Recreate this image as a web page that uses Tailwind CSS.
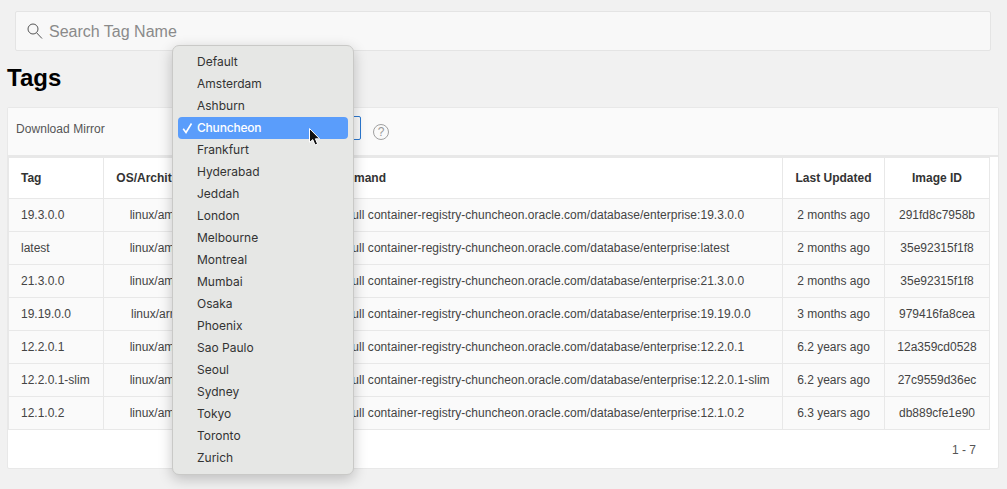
<!DOCTYPE html>
<html>
<head>
<meta charset="utf-8">
<script src="https://cdn.jsdelivr.net/npm/@tailwindcss/browser@4"></script>
</head>
<body class="relative h-[489px] w-[1007px] overflow-hidden bg-[#f1f1f1] font-['Liberation_Sans',sans-serif] text-[#333]">
<div class="px-[15px] pt-[11px] pr-[16px]">
  <div class="flex h-[40px] items-center rounded-[2px] border border-[#e4e4e4] bg-[#f8f8f8] pl-[10px]">
    <svg class="h-[17px] w-[17px] text-[#555]" viewBox="0 0 17 17" fill="none" stroke="currentColor" stroke-width="1"><circle cx="7" cy="6" r="5"/><path d="M10.6 9.8 L16 15.5"/></svg>
    <span class="ml-[6px] pt-[2px] text-[16px] text-[#8a8a8a]">Search Tag Name</span>
  </div>
</div>
<h1 class="ml-[7px] mt-[12px] h-[33px] text-[24px] leading-[30px] font-bold text-black">Tags</h1>
<div class="ml-[7px] mt-[11px] h-[362px] w-[992px] rounded-[2px] border border-[#e8e8e8] bg-white">
  <div class="flex h-[49px] items-start border-b-[2px] border-[#e8e8e8] bg-[#fafafa]">
    <span class="ml-[8px] mt-[14px] text-[12px] leading-[14px] tracking-[0.05px] text-[#555]">Download Mirror</span>
    <div class="ml-auto mr-[637px] mt-[8px] h-[24px] w-[20px] rounded-r-[2px] border border-[#2b78d0]"></div>
  </div>
  <table class="w-[981px] table-fixed border-collapse text-[12px] text-[#444]">
    <colgroup><col class="w-[95px]"><col class="w-[117px]"><col class="w-[73px]"><col class="w-[489px]"><col class="w-[102px]"><col class="w-[105px]"></colgroup>
    <thead class="bg-white font-bold text-[#333]">
      <tr class="h-[41px]">
        <th class="border border-[#e8e8e8] pl-[12px] text-left">Tag</th>
        <th class="border border-[#e8e8e8] whitespace-nowrap">OS/Architecture</th>
        <th class="border border-[#e8e8e8]"></th>
        <th class="border border-[#e8e8e8] pl-[8px] text-left">Pull Command</th>
        <th class="border border-[#e8e8e8]">Last Updated</th>
        <th class="border border-[#e8e8e8]">Image ID</th>
      </tr>
    </thead>
    <tbody>
      <tr class="h-[33px] bg-[#fafafa]"><td class="border border-[#e8e8e8] pl-[12px]">19.3.0.0</td><td class="border border-[#e8e8e8] text-center">linux/amd64</td><td class="border border-[#e8e8e8]"></td><td class="border border-[#e8e8e8] pl-[12px] tracking-[0.04px] whitespace-nowrap">docker pull container-registry-chuncheon.oracle.com/database/enterprise:19.3.0.0</td><td class="border border-[#e8e8e8] text-center">2 months ago</td><td class="border border-[#e8e8e8] text-center">291fd8c7958b</td></tr>
      <tr class="h-[33px] bg-[#fafafa]"><td class="border border-[#e8e8e8] pl-[12px]">latest</td><td class="border border-[#e8e8e8] text-center">linux/amd64</td><td class="border border-[#e8e8e8]"></td><td class="border border-[#e8e8e8] pl-[12px] tracking-[0.04px] whitespace-nowrap">docker pull container-registry-chuncheon.oracle.com/database/enterprise:latest</td><td class="border border-[#e8e8e8] text-center">2 months ago</td><td class="border border-[#e8e8e8] text-center">35e92315f1f8</td></tr>
      <tr class="h-[33px] bg-[#fafafa]"><td class="border border-[#e8e8e8] pl-[12px]">21.3.0.0</td><td class="border border-[#e8e8e8] text-center">linux/amd64</td><td class="border border-[#e8e8e8]"></td><td class="border border-[#e8e8e8] pl-[12px] tracking-[0.04px] whitespace-nowrap">docker pull container-registry-chuncheon.oracle.com/database/enterprise:21.3.0.0</td><td class="border border-[#e8e8e8] text-center">2 months ago</td><td class="border border-[#e8e8e8] text-center">35e92315f1f8</td></tr>
      <tr class="h-[33px] bg-[#fafafa]"><td class="border border-[#e8e8e8] pl-[12px]">19.19.0.0</td><td class="border border-[#e8e8e8] text-center">linux/arm64</td><td class="border border-[#e8e8e8]"></td><td class="border border-[#e8e8e8] pl-[12px] tracking-[0.04px] whitespace-nowrap">docker pull container-registry-chuncheon.oracle.com/database/enterprise:19.19.0.0</td><td class="border border-[#e8e8e8] text-center">3 months ago</td><td class="border border-[#e8e8e8] text-center">979416fa8cea</td></tr>
      <tr class="h-[33px] bg-[#fafafa]"><td class="border border-[#e8e8e8] pl-[12px]">12.2.0.1</td><td class="border border-[#e8e8e8] text-center">linux/amd64</td><td class="border border-[#e8e8e8]"></td><td class="border border-[#e8e8e8] pl-[12px] tracking-[0.04px] whitespace-nowrap">docker pull container-registry-chuncheon.oracle.com/database/enterprise:12.2.0.1</td><td class="border border-[#e8e8e8] text-center">6.2 years ago</td><td class="border border-[#e8e8e8] text-center">12a359cd0528</td></tr>
      <tr class="h-[33px] bg-[#fafafa]"><td class="border border-[#e8e8e8] pl-[12px]">12.2.0.1-slim</td><td class="border border-[#e8e8e8] text-center">linux/amd64</td><td class="border border-[#e8e8e8]"></td><td class="border border-[#e8e8e8] pl-[12px] tracking-[0.04px] whitespace-nowrap">docker pull container-registry-chuncheon.oracle.com/database/enterprise:12.2.0.1-slim</td><td class="border border-[#e8e8e8] text-center">6.2 years ago</td><td class="border border-[#e8e8e8] text-center">27c9559d36ec</td></tr>
      <tr class="h-[33px] bg-[#fafafa]"><td class="border border-[#e8e8e8] pl-[12px]">12.1.0.2</td><td class="border border-[#e8e8e8] text-center">linux/amd64</td><td class="border border-[#e8e8e8]"></td><td class="border border-[#e8e8e8] pl-[12px] tracking-[0.04px] whitespace-nowrap">docker pull container-registry-chuncheon.oracle.com/database/enterprise:12.1.0.2</td><td class="border border-[#e8e8e8] text-center">6.3 years ago</td><td class="border border-[#e8e8e8] text-center">db889cfe1e90</td></tr>
    </tbody>
  </table>
  <div class="mr-[22px] mt-[13px] text-right text-[12px] leading-[14px] text-[#555]">1 - 7</div>
</div>

<div class="absolute left-[373px] top-[124px] flex h-[16px] w-[16px] items-center justify-center rounded-full border border-[#a0a0a0] text-[12px] leading-none text-[#999]">?</div>

<div class="absolute left-[172px] top-[45px] h-[430px] w-[182px] rounded-[7px] border border-[#c9c9c7] bg-[#e6e7e5] px-[5px] pt-[5px] font-['Inter',sans-serif] text-[12px] leading-[22px] text-[#333] shadow-[0_4px_14px_rgba(0,0,0,0.22)]">
  <div class="h-[22px] pl-[19px]">Default</div>
  <div class="h-[22px] pl-[19px]">Amsterdam</div>
  <div class="h-[22px] pl-[19px]">Ashburn</div>
  <div class="relative h-[22px] rounded-[4px] bg-[#5a9dfb] pl-[19px] font-medium tracking-[-0.2px] text-white"><svg class="absolute left-[4px] top-[5px] h-[12px] w-[11px]" viewBox="0 0 11 12" fill="none" stroke="#fff" stroke-width="1.6"><path d="M1.2 6.8 L4 10.5 L9.5 1.5"/></svg>Chuncheon</div>
  <div class="h-[22px] pl-[19px]">Frankfurt</div>
  <div class="h-[22px] pl-[19px]">Hyderabad</div>
  <div class="h-[22px] pl-[19px]">Jeddah</div>
  <div class="h-[22px] pl-[19px]">London</div>
  <div class="h-[22px] pl-[19px]">Melbourne</div>
  <div class="h-[22px] pl-[19px]">Montreal</div>
  <div class="h-[22px] pl-[19px]">Mumbai</div>
  <div class="h-[22px] pl-[19px]">Osaka</div>
  <div class="h-[22px] pl-[19px]">Phoenix</div>
  <div class="h-[22px] pl-[19px]">Sao Paulo</div>
  <div class="h-[22px] pl-[19px]">Seoul</div>
  <div class="h-[22px] pl-[19px]">Sydney</div>
  <div class="h-[22px] pl-[19px]">Tokyo</div>
  <div class="h-[22px] pl-[19px]">Toronto</div>
  <div class="h-[22px] pl-[19px]">Zurich</div>
</div>

<svg class="absolute left-[308px] top-[127px] h-[20px] w-[13px]" viewBox="0 0 13 20"><path d="M1.5 1.5 L1.5 15.5 L4.8 12.6 L7 18 L9.6 17 L7.4 11.8 L11.6 11.8 Z" fill="#111" stroke="#fff" stroke-width="1"/></svg>
</body>
</html>
